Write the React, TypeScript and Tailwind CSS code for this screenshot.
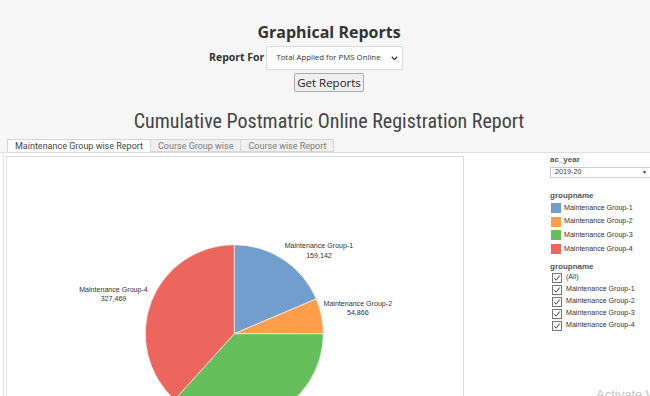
const groups = [
  { name: 'Maintenance Group-1', value: 159142, color: '#729ece' },
  { name: 'Maintenance Group-2', value: 54866, color: '#ff9e4a' },
  { name: 'Maintenance Group-3', value: 313500, color: '#67bf5c' },
  { name: 'Maintenance Group-4', value: 327469, color: '#ed665d' },
];

function PieChart() {
  const cx = 227.3;
  const cy = 176.7;
  const r = 89;
  const total = groups.reduce((s, g) => s + g.value, 0);
  let start = 0;
  const slices = groups.map((g) => {
    const a0 = start;
    const a1 = start + (g.value / total) * Math.PI * 2;
    start = a1;
    const x0 = cx + r * Math.sin(a0);
    const y0 = cy - r * Math.cos(a0);
    const x1 = cx + r * Math.sin(a1);
    const y1 = cy - r * Math.cos(a1);
    const large = a1 - a0 > Math.PI ? 1 : 0;
    return (
      <path
        key={g.name}
        d={`M${cx},${cy} L${x0},${y0} A${r},${r} 0 ${large} 1 ${x1},${y1} Z`}
        fill={g.color}
        stroke="#fff"
        strokeWidth={0.6}
      />
    );
  });

  const labels = [
    { x: 312, y: 91.3, name: 'Maintenance Group-1', value: '159,142' },
    { x: 350.8, y: 149, name: 'Maintenance Group-2', value: '54,866' },
    { x: 106.5, y: 134.7, name: 'Maintenance Group-4', value: '327,469' },
  ];

  return (
    <svg width="456" height="260" className="block">
      {slices}
      {labels.map((l) => (
        <text
          key={l.name}
          x={l.x}
          y={l.y}
          textAnchor="middle"
          fontSize="7.1"
          fill="#333"
          fontFamily='"Liberation Sans", Arial, sans-serif'
        >
          <tspan x={l.x}>{l.name}</tspan>
          <tspan x={l.x} dy="9.4">
            {l.value}
          </tspan>
        </text>
      ))}
    </svg>
  );
}

function CheckBox() {
  return (
    <svg width="10" height="10" className="shrink-0">
      <rect x="0.5" y="0.5" width="9" height="9" fill="#fff" stroke="#777" />
      <path d="M2.3 5.2 L4.2 7.2 L7.8 2.4" fill="none" stroke="#444" strokeWidth="1" />
    </svg>
  );
}

export default function App() {
  const tabs = ['Maintenance Group wise Report', 'Course Group wise', 'Course wise Report'];

  return (
    <div className="relative w-[650px] h-[396px] overflow-hidden bg-white text-[#333]">
      {/* header */}
      <div className="bg-[#f6f6f6] pt-[22px] font-['Open_Sans',sans-serif]">
        <div className="pl-2 text-center text-[16px] leading-[20px] font-bold text-[#333]">
          Graphical Reports
        </div>
        <div className="flex items-center pl-[209px] mt-[4px]">
          <span className="text-[10.5px] font-bold text-[#333] mr-[2px]">Report For</span>
          <div className="flex items-center justify-between w-[137px] h-[24px] bg-white border border-[#dcdcdc] pl-[9px] pr-[4px] text-[7.8px] text-[#333] whitespace-nowrap">
            <span>Total Applied for PMS Online</span>
            <svg width="7" height="5" viewBox="0 0 7 5" className="shrink-0">
              <path d="M0.8 0.8 L3.5 3.6 L6.2 0.8" fill="none" stroke="#333" strokeWidth="1.3" />
            </svg>
          </div>
        </div>
        <div className="flex justify-center pl-[8px] mt-[3px]">
          <button className="w-[70px] h-[19px] bg-[#efefef] border border-[#aaa] rounded-[2px] text-[11.5px] leading-none text-[#222]">
            Get Reports
          </button>
        </div>
        <div className="pl-2 mt-[16px] text-center text-[20px] leading-[26px] text-[#444] font-['Roboto_Condensed','Liberation_Sans_Narrow','DejaVu_Sans_Condensed',sans-serif]">
          Cumulative Postmatric Online Registration Report
        </div>
        {/* tabs */}
        <div className="flex pl-[7px] mt-[5px] border-b border-[#dedede] font-['Roboto',sans-serif]">
          {tabs.map((t, i) => (
            <div
              key={t}
              className={
                i === 0
                  ? 'h-[13px] px-[7px] -mb-px bg-white border border-b-0 border-[#d6d6d6] text-[9px] leading-[12px] text-[#444]'
                  : 'h-[13px] px-[7px] bg-[#f0f0f0] border border-l-0 border-[#d6d6d6] text-[9px] leading-[12px] text-[#7a7a7a]'
              }
            >
              {t}
            </div>
          ))}
        </div>
      </div>

      {/* body */}
      <div className="ml-[3px] border-l border-[#e2e2e2] flex font-['Liberation_Sans',Arial,sans-serif]">
        <div className="shrink-0 ml-[2px] mt-[3px] w-[458px] h-[260px] border border-[#dcdcdc] overflow-hidden">
          <PieChart />
        </div>

        <div className="ml-[86px] mt-[2px] w-[110px] shrink-0">
          <div className="text-[8px] leading-[10px] font-bold text-[#555]">ac_year</div>
          <div className="mt-[2px] flex items-center justify-between w-[104px] h-[11px] border border-[#ccc] pl-[4px] pr-[6px] text-[7.2px] text-[#333]">
            <span>2019-20</span>
            <span className="text-[5px] text-[#333]">▼</span>
          </div>

          <div className="mt-[13px] text-[8px] leading-[10px] font-bold text-[#555]">groupname</div>
          <div className="mt-[2px] flex flex-col gap-[4px] pl-[1px]">
            {groups.map((g) => (
              <div key={g.name} className="flex items-center h-[9.7px]">
                <span className="w-[10px] h-[10px] shrink-0" style={{ backgroundColor: g.color }} />
                <span className="ml-[3px] text-[7.1px] text-[#333]">{g.name}</span>
              </div>
            ))}
          </div>

          <div className="mt-[8px] text-[8px] leading-[10px] font-bold text-[#555]">groupname</div>
          <div className="mt-[1px] flex flex-col gap-[2px] pl-[2px]">
            {['(All)', ...groups.map((g) => g.name)].map((n) => (
              <div key={n} className="flex items-center h-[10px]">
                <CheckBox />
                <span className="ml-[4px] text-[7.1px] text-[#333]">{n}</span>
              </div>
            ))}
          </div>
        </div>
      </div>

      <div className="absolute left-[596px] top-[385px] text-[13px] text-[#c4c4c4] whitespace-nowrap font-['Liberation_Sans',sans-serif]">
        Activate Windows
      </div>
    </div>
  );
}
